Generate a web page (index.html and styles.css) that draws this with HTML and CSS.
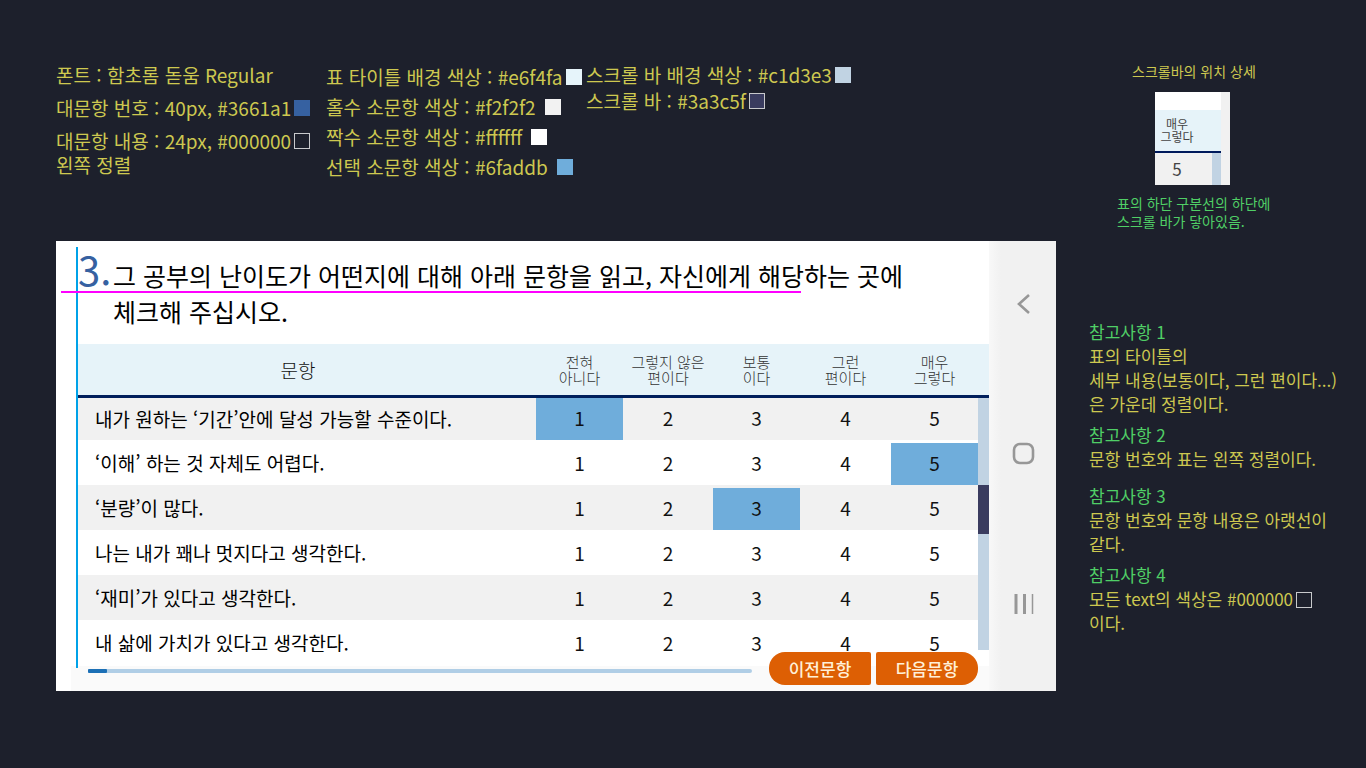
FILE: index.html
```html
<!DOCTYPE html>
<html lang="ko">
<head>
<meta charset="utf-8">
<meta name="viewport" content="width=device-width, initial-scale=1">
<title>설문 화면 디자인 가이드</title>
<link rel="stylesheet" href="styles.css">
</head>
<body>
<main class="board">
  <section class="spec">
    <ul class="spec-list spec-fonts">
      <li>폰트 : 함초롬 돋움 Regular</li>
      <li>대문항 번호 : 40px, #3661a1<i class="swatch blue"></i></li>
      <li>대문항 내용 : 24px, #000000<i class="swatch outline"></i><br>왼쪽 정렬</li>
    </ul>
    <ul class="spec-list spec-table">
      <li>표 타이틀 배경 색상 : #e6f4fa<i class="swatch title"></i></li>
      <li>홀수 소문항 색상 : #f2f2f2<i class="swatch odd far"></i></li>
      <li>짝수 소문항 색상 : #ffffff<i class="swatch even far"></i></li>
      <li>선택 소문항 색상 : #6faddb<i class="swatch picked far"></i></li>
    </ul>
    <ul class="spec-list spec-scroll">
      <li>스크롤 바 배경 색상 : #c1d3e3<i class="swatch track"></i></li>
      <li>스크롤 바 : #3a3c5f<i class="swatch thumb"></i></li>
    </ul>
  </section>

  <figure class="detail">
    <p class="detail-title">스크롤바의 위치 상세</p>
    <div class="crop">
      <div class="crop-body">
        <div class="crop-head">매우<br>그렇다</div>
        <div class="crop-row"><span>5</span></div>
      </div>
    </div>
    <figcaption>표의 하단 구분선의 하단에<br>스크롤 바가 닿아있음.</figcaption>
  </figure>

  <section class="device">
    <div class="guide guide-v"></div>
    <div class="guide guide-h"></div>
    <form class="survey">
      <header class="question">
        <span class="number">3.</span>
        <h1>그 공부의 난이도가 어떤지에 대해 아래 문항을 읽고, 자신에게 해당하는 곳에<br>체크해 주십시오.</h1>
      </header>
      <div class="scroller">
        <table>
          <colgroup><col><col class="w87"><col class="w90"><col class="w87"><col class="w91"><col class="w87"><col class="w11"></colgroup>
          <thead>
            <tr><th class="item" scope="col">문항</th><th scope="col">전혀<br>아니다</th><th scope="col">그렇지 않은<br>편이다</th><th scope="col">보통<br>이다</th><th scope="col">그런<br>편이다</th><th scope="col">매우<br>그렇다</th><th></th></tr>
          </thead>
          <tbody>
            <tr><th scope="row">내가 원하는 ‘기간’안에 달성 가능할 수준이다.</th>
              <td><label><input type="radio" name="q1" checked><span>1</span></label></td><td><label><input type="radio" name="q1"><span>2</span></label></td><td><label><input type="radio" name="q1"><span>3</span></label></td><td><label><input type="radio" name="q1"><span>4</span></label></td><td><label><input type="radio" name="q1"><span>5</span></label></td><td></td></tr>
            <tr><th scope="row">‘이해’ 하는 것 자체도 어렵다.</th>
              <td><label><input type="radio" name="q2"><span>1</span></label></td><td><label><input type="radio" name="q2"><span>2</span></label></td><td><label><input type="radio" name="q2"><span>3</span></label></td><td><label><input type="radio" name="q2"><span>4</span></label></td><td><label><input type="radio" name="q2" checked><span>5</span></label></td><td></td></tr>
            <tr><th scope="row">‘분량’이 많다.</th>
              <td><label><input type="radio" name="q3"><span>1</span></label></td><td><label><input type="radio" name="q3"><span>2</span></label></td><td><label><input type="radio" name="q3" checked><span>3</span></label></td><td><label><input type="radio" name="q3"><span>4</span></label></td><td><label><input type="radio" name="q3"><span>5</span></label></td><td></td></tr>
            <tr><th scope="row">나는 내가 꽤나 멋지다고 생각한다.</th>
              <td><label><input type="radio" name="q4"><span>1</span></label></td><td><label><input type="radio" name="q4"><span>2</span></label></td><td><label><input type="radio" name="q4"><span>3</span></label></td><td><label><input type="radio" name="q4"><span>4</span></label></td><td><label><input type="radio" name="q4"><span>5</span></label></td><td></td></tr>
            <tr><th scope="row">‘재미’가 있다고 생각한다.</th>
              <td><label><input type="radio" name="q5"><span>1</span></label></td><td><label><input type="radio" name="q5"><span>2</span></label></td><td><label><input type="radio" name="q5"><span>3</span></label></td><td><label><input type="radio" name="q5"><span>4</span></label></td><td><label><input type="radio" name="q5"><span>5</span></label></td><td></td></tr>
            <tr><th scope="row">내 삶에 가치가 있다고 생각한다.</th>
              <td><label><input type="radio" name="q6"><span>1</span></label></td><td><label><input type="radio" name="q6"><span>2</span></label></td><td><label><input type="radio" name="q6"><span>3</span></label></td><td><label><input type="radio" name="q6"><span>4</span></label></td><td><label><input type="radio" name="q6"><span>5</span></label></td><td></td></tr>
          </tbody>
        </table>
        <div class="scrollbar"><div class="scroll-thumb"></div></div>
      </div>
      <footer class="pager">
        <div class="progress"><div class="progress-fill"></div></div>
        <button type="button" class="prev">이전문항</button>
        <button type="button" class="next">다음문항</button>
      </footer>
    </form>
    <nav class="system">
      <button type="button" aria-label="뒤로"><svg width="24" height="24" viewBox="0 0 24 24"><path d="M18 3 8 12l10 9"/></svg></button>
      <button type="button" aria-label="홈"><svg width="24" height="24" viewBox="0 0 24 24"><rect x="3" y="2" width="19" height="19" rx="6"/></svg></button>
      <button type="button" aria-label="최근 앱"><svg width="24" height="24" viewBox="0 0 24 24"><path class="bar" d="M5 2v20M13.500 2v20"/><path class="hair" d="M21.500 2v20"/></svg></button>
    </nav>
  </section>

  <aside class="notes">
    <section>
      <h2>참고사항 1</h2>
      <p>표의 타이틀의<br>세부 내용(보통이다, 그런 편이다...)<br>은 가운데 정렬이다.</p>
    </section>
    <section class="spaced">
      <h2>참고사항 2</h2>
      <p>문항 번호와 표는 왼쪽 정렬이다.</p>
    </section>
    <section>
      <h2>참고사항 3</h2>
      <p>문항 번호와 문항 내용은 아랫선이<br>같다.</p>
    </section>
    <section>
      <h2>참고사항 4</h2>
      <p>모든 text의 색상은 #000000<i class="swatch outline"></i><br>이다.</p>
    </section>
  </aside>
</main>
</body>
</html>
```
FILE: styles.css
```css
* { box-sizing: border-box; }

body {
  margin: 0;
  background: #1d202c;
  color: #cdc850;
  font-family: "Noto Sans CJK KR", sans-serif;
}

h1, h2, p, ul, figure { margin: 0; padding: 0; font-weight: 400; }
ul { list-style: none; }
button { border: 0; padding: 0; font-family: inherit; cursor: pointer; }

.board {
  display: grid;
  grid-template-columns: minmax(0, 1fr) 245px;
  grid-template-rows: 241px auto;
  column-gap: 33px;
  padding: 0 32px 0 56px;
}

/* colour and font specification */
.spec {
  display: grid;
  grid-template-columns: 270px 260px auto;
  justify-content: start;
  align-items: start;
  padding-top: 63px;
  font-size: 19px;
  line-height: 24px;
  white-space: nowrap;
}
.spec-list { display: flex; flex-direction: column; }
.spec-fonts { gap: 9px; }
.spec-table { gap: 6px; padding-top: 2px; }
.spec-scroll { gap: 2px; }

.swatch {
  display: inline-block;
  width: 16px;
  height: 16px;
  margin-left: 3px;
  vertical-align: 0;
}
.swatch.far { margin-left: 9px; }
.swatch.blue { background: #3661a1; }
.swatch.outline { border: 1px solid #c8c9cc; }
.swatch.title { background: #e6f4fa; }
.swatch.odd { background: #f2f2f2; }
.swatch.even { background: #fff; }
.swatch.picked { background: #6faddb; }
.swatch.track { background: #c1d3e3; }
.swatch.thumb { background: #3a3c5f; border: 1px solid #c8c9cc; }

/* scrollbar detail */
.detail {
  display: flex;
  flex-direction: column;
  align-items: flex-start;
  padding: 62px 0 0 28px;
  font-size: 14px;
  line-height: 18px;
}
.detail-title { margin-left: 15px; }
.detail figcaption { margin-top: 9px; color: #50cf66; }
.crop {
  width: 75px;
  margin: 12px 0 0 38px;
  padding: 18px 9px 0 0;
  background: linear-gradient(to right, #fff 66px, #f1f1f1 66px);
  color: #444;
}
.crop-head {
  padding: 7px 22px 8px 0;
  height: 43px;
  background: #e6f3f9;
  border-bottom: 2px solid #001a5c;
  font-size: 12px;
  line-height: 13px;
  text-align: center;
  white-space: nowrap;
}
.crop-row {
  display: flex;
  justify-content: center;
  align-items: center;
  height: 32px;
  padding-right: 13px;
  background: #f1f1f1;
  border-right: 9px solid #c1d3e3;
  font-size: 17px;
}

/* device mock-up */
.device {
  position: relative;
  display: grid;
  grid-template-columns: minmax(0, 1fr) 67px;
  background: #fff;
  color: #000;
}
.guide { position: absolute; z-index: 2; }
.guide-v { left: 20px; top: 6px; bottom: 23px; width: 2px; background: #00a2e8; }
.guide-h { left: 5px; top: 50px; width: 74%; height: 2px; background: #f0f; }

.question {
  display: flex;
  align-items: baseline;
  height: 103px;
  padding: 10px 0 0 22px;
}
.number {
  flex: none;
  width: 35px;
  color: #3661a1;
  font-size: 40px;
  line-height: 36px;
}
.question h1 {
  font-size: 25px;
  line-height: 36px;
  white-space: nowrap;
}

.scroller {
  position: relative;
  height: 308px;
  margin-left: 22px;
  overflow: hidden;
}
table { width: 100%; table-layout: fixed; border-collapse: separate; border-spacing: 0; }
.w87 { width: 87px; }
.w90 { width: 90px; }
.w91 { width: 91px; }
.w11 { width: 11px; }
th, td { padding: 0; font-weight: 400; }
thead th {
  height: 54px;
  background: #e6f3f9;
  border-bottom: 3px solid #001f5c;
  color: #333;
  font-size: 15px;
  font-weight: 300;
  line-height: 16px;
  white-space: nowrap;
}
thead .item { padding-right: 18px; color: #111; font-size: 19px; }
tbody th {
  padding-left: 17px;
  font-size: 19px;
  line-height: 24px;
  text-align: left;
  white-space: nowrap;
}
tbody tr { height: 45px; }
tbody tr:first-child { height: 42px; }
tbody tr:nth-child(odd) { background: #f1f1f1; }
tbody td { vertical-align: bottom; }
label { display: block; position: relative; }
label input { position: absolute; inset: 0; margin: 0; opacity: 0; }
label span {
  display: block;
  height: 42px;
  font-size: 19px;
  line-height: 40px;
  text-align: center;
  color: #111;
}
input:checked + span { background: #6faddb; }

.scrollbar {
  position: absolute;
  top: 54px;
  right: 0;
  bottom: 2px;
  width: 11px;
  padding-top: 87px;
  background: #c1d3e3;
}
.scroll-thumb { height: 49px; background: #3a3c5f; }

.pager {
  display: flex;
  align-items: center;
  gap: 5px;
  margin-left: 15px;
  padding: 0 11px 6px 17px;
  background: linear-gradient(#fff 14px, #fafafa 14px);
}
.progress {
  flex: 1;
  height: 4px;
  margin: 4px 12px 0 0;
  border-radius: 2px;
  background: #b0cee6;
}
.progress-fill { width: 19px; height: 4px; border-radius: 1px; background: #1c70b6; }
.prev, .next {
  width: 102px;
  height: 33px;
  background: #dd5f04;
  color: #fff0d8;
  font-size: 17px;
  font-weight: 500;
  line-height: 31px;
}
.prev { border-radius: 16px 2px 2px 16px; }
.next { border-radius: 2px 16px 16px 2px; }

.system {
  display: flex;
  flex-direction: column;
  align-items: center;
  gap: 110px;
  padding: 43px 0;
  background: linear-gradient(to right, #f8f8f8, #f1f1f1 12px);
}
.system button { width: 40px; height: 40px; background: none; }
.system svg { display: block; margin: auto; fill: none; stroke: #979797; stroke-width: 2.6; }
.system .bar { stroke-width: 3; }
.system .hair { stroke-width: 1.5; }

/* side notes */
.notes {
  padding-top: 79px;
  font-size: 17px;
  line-height: 24px;
  white-space: nowrap;
}
.notes section { margin-bottom: 7px; }
.notes .spaced { margin-bottom: 13px; }
.notes h2 { color: #50cf66; font-size: 17px; }
.notes .swatch { vertical-align: -2px; }
```
